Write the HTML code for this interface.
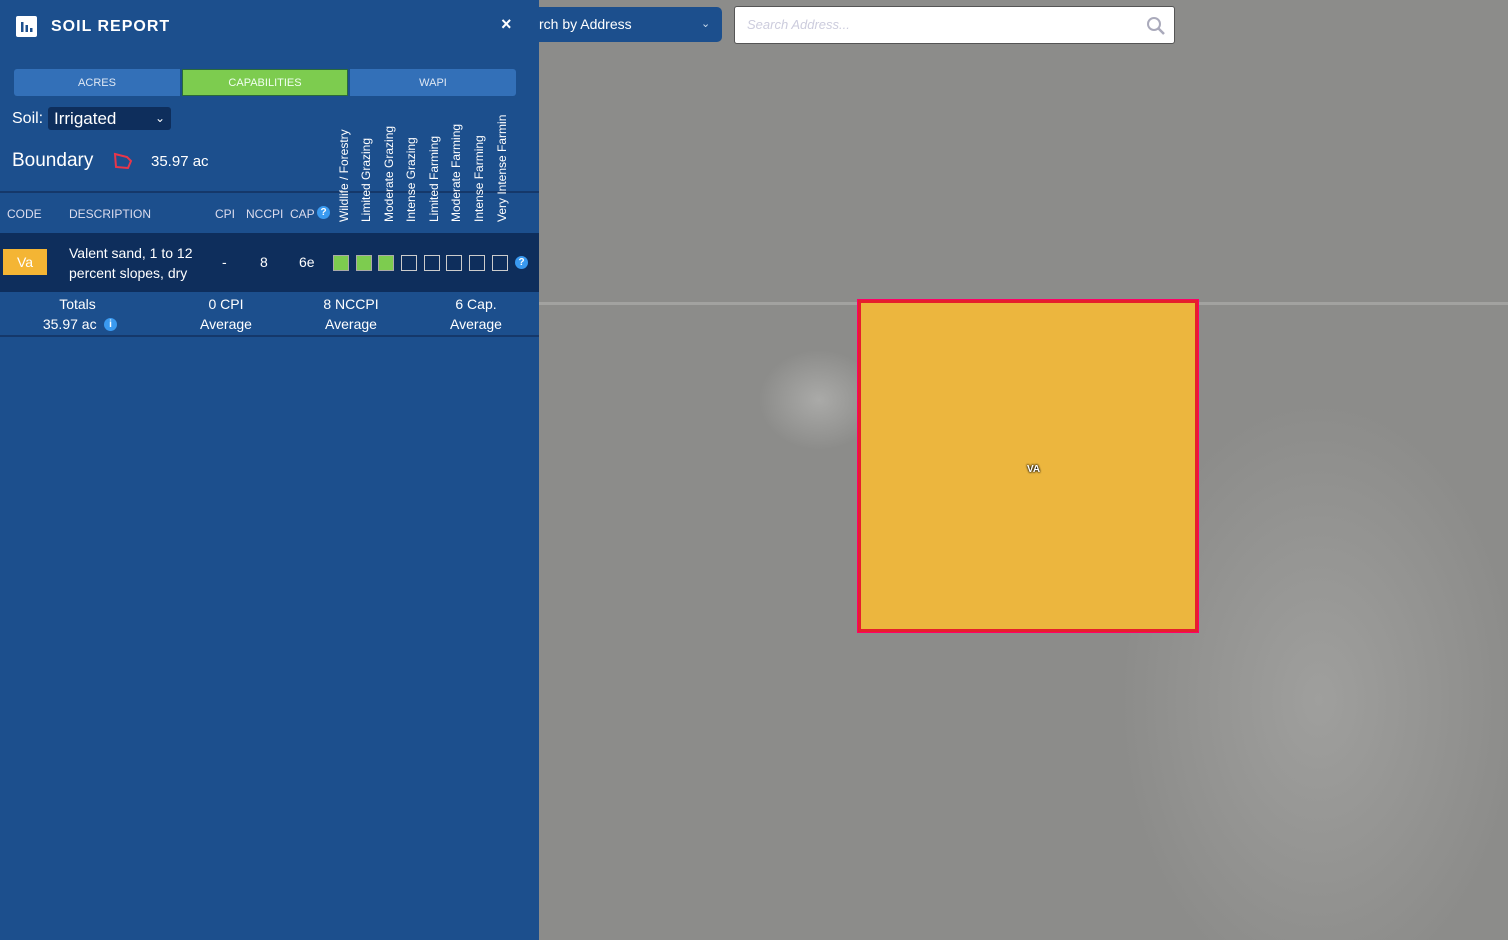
<!DOCTYPE html>
<html><head><style>
*{margin:0;padding:0;box-sizing:border-box}
body{width:1508px;height:940px;overflow:hidden;font-family:"Liberation Sans",sans-serif;position:relative;background:#8b8b89}
#map{position:absolute;left:539px;top:0;width:969px;height:940px;background:
radial-gradient(ellipse 60px 50px at 280px 400px,#aaaaa8,transparent),
radial-gradient(ellipse 200px 300px at 780px 700px,#9f9f9d,transparent),
#8c8c8a}
.road{position:absolute;left:0;top:302px;width:969px;height:3px;background:#a2a2a0}
#panel{position:absolute;left:0;top:0;width:539px;height:940px;background:#1c4f8d;color:#fff}
.t{position:absolute;white-space:nowrap}
.tab{position:absolute;top:69px;height:27px;font-size:11px;text-align:center;line-height:29px;color:#dfe8f4}
.sq{position:absolute;top:255px;width:16px;height:16px;border:1.5px solid #ccc}
.g{background:#7dcc4f;border-color:#aaa}
.vh{position:absolute;bottom:718px;transform-origin:left bottom;transform:rotate(-90deg);font-size:12px;white-space:nowrap;color:#fff}
</style></head><body>
<div id="map">
<div class="road"></div>
<div style="position:absolute;left:0;top:7px;width:183px;height:35px;background:#1c4f8d;border-radius:0 5px 5px 0;color:#fff;font-size:14px;line-height:35px;padding-left:0">rch by Address<span style="position:absolute;left:162px;font-size:11px;color:#cde">&#8964;</span></div>
<div style="position:absolute;left:195px;top:6px;width:441px;height:38px;background:#fff;border:1px solid #555;border-radius:3px;font-size:13px;color:#ccd;font-style:italic;line-height:36px;padding-left:12px">Search Address...
<svg style="position:absolute;right:8px;top:9px" width="20" height="20"><circle cx="8" cy="8" r="6" stroke="#aab" stroke-width="2" fill="none"/><line x1="12.5" y1="12.5" x2="18" y2="18" stroke="#aab" stroke-width="2.5"/></svg></div>
<div style="position:absolute;left:319px;top:300px;width:340px;height:332px;background:#ecb63e;border:3px solid #e61f2b;box-shadow:0 0 0 1px #f06"></div>
<div style="position:absolute;left:488px;top:464px;font-size:10px;font-weight:bold;color:#fff;text-shadow:0 0 2px #000,0 0 2px #000">VA</div>
</div>
<div id="panel">
<svg style="position:absolute;left:16px;top:16px" width="21" height="21"><rect width="21" height="21" rx="2" fill="#fff"/><rect x="5" y="6" width="2.5" height="10" fill="#1c4f8d"/><rect x="9.5" y="9" width="2.5" height="7" fill="#1c4f8d"/><rect x="14" y="12" width="2.5" height="4" fill="#1c4f8d"/></svg>
<div class="t" style="left:51px;top:18px;font-size:16px;font-weight:bold;letter-spacing:1px">SOIL REPORT</div>
<div class="t" style="left:501px;top:14px;font-size:18px;font-weight:bold">×</div>
<div class="tab" style="left:14px;width:166px;background:#3370b8;border-radius:3px 0 0 3px">ACRES</div>
<div class="tab" style="left:182px;width:166px;background:#7dcc4f;border:1px solid #2a6a3a;color:#f0fff0;line-height:27px">CAPABILITIES</div>
<div class="tab" style="left:350px;width:166px;background:#3370b8;border-radius:0 3px 3px 0">WAPI</div>
<div class="t" style="left:12px;top:110px;font-size:16px">Soil:</div>
<div class="t" style="left:48px;top:107px;width:123px;height:23px;background:#0e2e5c;border-radius:3px;font-size:17px;padding-left:6px;line-height:23px">Irrigated<span style="position:absolute;right:6px;font-size:12px">&#8964;</span></div>
<div class="t" style="left:12px;top:150px;font-size:19px">Boundary</div>
<svg style="position:absolute;left:112px;top:151px" width="22" height="20"><path d="M3 3 L15 6 L19 10 L16 17 L4 16 Z" fill="none" stroke="#e8364a" stroke-width="2"/></svg>
<div class="t" style="left:151px;top:153px;font-size:15px">35.97 ac</div>
<div style="position:absolute;left:0;top:191px;width:539px;height:2px;background:#15386a"></div>
<div class="vh" style="left:351px">Wildlife / Forestry</div>
<div class="vh" style="left:373px">Limited Grazing</div>
<div class="vh" style="left:396px">Moderate Grazing</div>
<div class="vh" style="left:418px">Intense Grazing</div>
<div class="vh" style="left:441px">Limited Farming</div>
<div class="vh" style="left:463px">Moderate Farming</div>
<div class="vh" style="left:486px">Intense Farming</div>
<div class="vh" style="left:509px">Very Intense Farmin</div>
<div class="t" style="left:7px;top:207px;font-size:12px;color:#dde">CODE</div>
<div class="t" style="left:69px;top:207px;font-size:12px;color:#dde">DESCRIPTION</div>
<div class="t" style="left:215px;top:207px;font-size:12px;color:#dde">CPI</div>
<div class="t" style="left:246px;top:207px;font-size:12px;color:#dde">NCCPI</div>
<div class="t" style="left:290px;top:207px;font-size:12px;color:#dde">CAP</div>
<div class="t" style="left:317px;top:206px;width:13px;height:13px;border-radius:50%;background:#3a9af0;font-size:10px;text-align:center;line-height:13px;font-weight:bold">?</div>
<div style="position:absolute;left:0;top:233px;width:539px;height:59px;background:#0e2e5c"></div>
<div class="t" style="left:3px;top:249px;width:44px;height:26px;background:#f4b534;text-align:center;line-height:26px;font-size:14px">Va</div>
<div class="t" style="left:69px;top:243px;font-size:14px;line-height:20px">Valent sand, 1 to 12<br>percent slopes, dry</div>
<div class="t" style="left:222px;top:254px;font-size:14px">-</div>
<div class="t" style="left:260px;top:254px;font-size:14px">8</div>
<div class="t" style="left:299px;top:254px;font-size:14px">6e</div>
<div class="sq g" style="left:333px"></div><div class="sq g" style="left:356px"></div><div class="sq g" style="left:378px"></div>
<div class="sq" style="left:401px"></div><div class="sq" style="left:424px"></div><div class="sq" style="left:446px"></div><div class="sq" style="left:469px"></div><div class="sq" style="left:492px"></div>
<div class="t" style="left:515px;top:256px;width:13px;height:13px;border-radius:50%;background:#3a9af0;font-size:10px;text-align:center;line-height:13px;font-weight:bold">?</div>
<div class="t" style="left:0;top:294px;width:155px;text-align:center;font-size:14px;line-height:20px">Totals<br>35.97 ac &nbsp;&nbsp;&nbsp;</div>
<div class="t" style="left:104px;top:318px;width:13px;height:13px;border-radius:50%;background:#3a9af0;font-size:10px;text-align:center;line-height:13px;font-weight:bold">i</div>
<div class="t" style="left:176px;top:294px;width:100px;text-align:center;font-size:14px;line-height:20px">0 CPI<br>Average</div>
<div class="t" style="left:301px;top:294px;width:100px;text-align:center;font-size:14px;line-height:20px">8 NCCPI<br>Average</div>
<div class="t" style="left:426px;top:294px;width:100px;text-align:center;font-size:14px;line-height:20px">6 Cap.<br>Average</div>
<div style="position:absolute;left:0;top:335px;width:539px;height:2px;background:#15386a"></div>
</div>
</body></html>
